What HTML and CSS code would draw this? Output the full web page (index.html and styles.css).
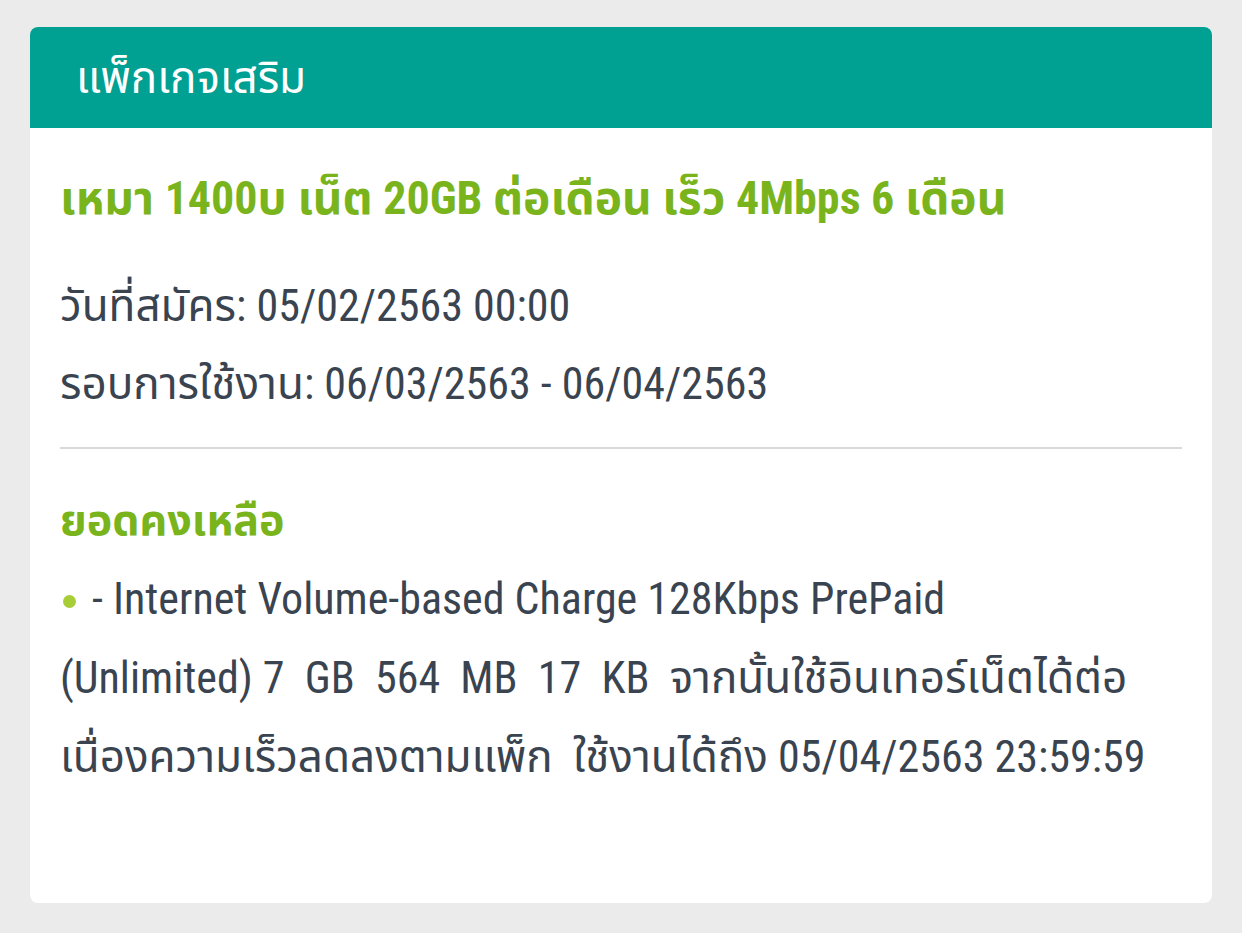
FILE: index.html
```html
<!DOCTYPE html>
<html lang="th">
<head>
<meta charset="utf-8">
<title>แพ็กเกจเสริม</title>
<link rel="stylesheet" href="styles.css">
</head>
<body>
<div class="card">
  <div class="card-head">
    <h1 class="card-title">แพ็กเกจเสริม</h1>
  </div>
  <div class="card-body">
    <h2 class="pkg-name">เหมา 1400บ เน็ต 20GB ต่อเดือน เร็ว 4Mbps 6 เดือน</h2>
    <p class="info info-first">วันที่สมัคร: 05/02/2563 00:00</p>
    <p class="info">รอบการใช้งาน: 06/03/2563 - 06/04/2563</p>
    <hr class="divider">
    <h3 class="balance-title">ยอดคงเหลือ</h3>
    <ul class="balance">
      <li class="balance-item"><span class="dot"></span>- Internet Volume-based Charge 128Kbps PrePaid<br>(Unlimited) 7  GB  564  MB  17  KB  จากนั้นใช้อินเทอร์เน็ตได้ต่อ<br>เนื่องความเร็วลดลงตามแพ็ก  ใช้งานได้ถึง 05/04/2563 23:59:59</li>
    </ul>
  </div>
</div>
</body>
</html>
```

FILE: styles.css
```css
html, body {
  margin: 0;
  padding: 0;
  background: #ebebeb;
}
body {
  padding: 27px 30px 30px 30px;
  font-family: Roboto, "Noto Sans Thai", "Liberation Sans", sans-serif;
  font-stretch: 75%;
  color: #3a4450;
}
.card {
  background: #ffffff;
  border-radius: 8px;
  height: 876px;
  overflow: hidden;
}
.card-head {
  background: #00a093;
  height: 101px;
  display: flex;
  align-items: center;
  padding-left: 46px;
}
.card-title {
  margin: 0;
  color: #ffffff;
  font-size: 44px;
  font-weight: normal;
  line-height: 1;
}
.card-body {
  padding: 40px 30px 0 30px;
}
.pkg-name {
  margin: 0;
  color: #7ab41c;
  font-size: 46px;
  font-weight: bold;
  line-height: 60px;
}
.info {
  margin: 0;
  font-size: 44px;
  line-height: 78px;
}
.info-first {
  margin-top: 39px;
}
.divider {
  border: 0;
  height: 2px;
  background: #d9d9d9;
  margin: 24px 0 0 0;
}
.balance-title {
  margin: 41px 0 0 0;
  color: #7ab41c;
  font-size: 43px;
  font-weight: bold;
  line-height: 60px;
}
.balance {
  list-style: none;
  margin: 10px 0 0 0;
  padding: 0;
}
.balance-item {
  font-size: 44px;
  line-height: 79px;
  white-space: pre-wrap;
}
.dot {
  display: inline-block;
  width: 13px;
  height: 13px;
  border-radius: 50%;
  background: #a7cd37;
  margin: 0 16px 0 3px;
  vertical-align: 6px;
}
```
